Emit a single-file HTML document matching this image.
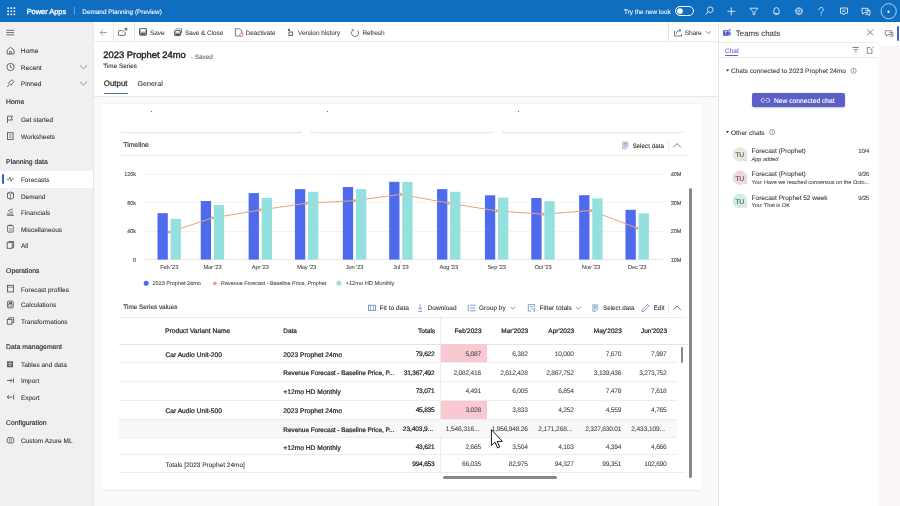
<!DOCTYPE html>
<html><head><meta charset="utf-8"><title>Demand Planning</title>
<style>
html,body{margin:0;padding:0;width:900px;height:506px;overflow:hidden;background:#fff;font-family:"Liberation Sans", sans-serif}
.t{position:absolute;white-space:nowrap;line-height:1;text-rendering:geometricPrecision}
.b{position:absolute}
svg.ov{position:absolute;left:0;top:0;width:900px;height:506px;overflow:visible}
</style></head><body>

<div class="b" style="left:0px;top:0px;width:900px;height:22px;background:#106EC1"></div>
<div class="b" style="left:0px;top:22px;width:93px;height:484px;background:#F0EFF2"></div>
<div class="b" style="left:93px;top:22px;width:1px;height:484px;background:#E6E6E6"></div>
<div class="b" style="left:94px;top:22px;width:624px;height:75px;background:#FFFFFF"></div>
<div class="b" style="left:94px;top:97px;width:624px;height:409px;background:#FCF9FB"></div>
<div class="b" style="left:94px;top:41px;width:624px;height:1px;background:#EDEBE9"></div>
<div class="b" style="left:94px;top:96px;width:624px;height:1px;background:#E8E6E6"></div>
<div class="b" style="left:101px;top:104px;width:601px;height:386px;background:#FFFFFF;box-shadow:0 0 1.5px rgba(0,0,0,0.09), 0 0.6px 1.4px rgba(0,0,0,0.05);border-radius:0 0 2px 2px"></div>
<div class="b" style="left:101px;top:104px;width:601px;height:40px;overflow:hidden">
<div class="b" style="left:19.0px;top:-10px;width:182.2px;height:37.6px;background:#fff;border-radius:0 0 2px 2px;box-shadow:0 0.5px 1px rgba(0,0,0,0.11), 0 0 0.7px rgba(0,0,0,0.11)"></div>
<div class="b" style="left:210.4px;top:-10px;width:181.9px;height:37.6px;background:#fff;border-radius:0 0 2px 2px;box-shadow:0 0.5px 1px rgba(0,0,0,0.11), 0 0 0.7px rgba(0,0,0,0.11)"></div>
<div class="b" style="left:401.2px;top:-10px;width:182.3px;height:37.6px;background:#fff;border-radius:0 0 2px 2px;box-shadow:0 0.5px 1px rgba(0,0,0,0.11), 0 0 0.7px rgba(0,0,0,0.11)"></div>
</div>
<div class="b" style="left:718px;top:22px;width:160px;height:484px;background:#FFFFFF"></div>
<div class="b" style="left:718px;top:22px;width:1px;height:484px;background:#E8E5E7"></div>
<div class="b" style="left:878px;top:22px;width:22px;height:22px;background:#FFFFFF"></div>
<div class="b" style="left:878.5px;top:44.5px;width:21.5px;height:461.5px;background:#FAF6FA"></div>
<div class="b" style="left:74.3px;top:6.5px;width:0.5px;height:8.5px;background:rgba(255,255,255,0.35)"></div>
<div class="b" style="left:675.2px;top:6.2px;width:18.5px;height:9.8px;border:0.85px solid #fff;border-radius:5px;box-sizing:border-box"></div>
<div class="b" style="left:0px;top:171px;width:92.6px;height:16.5px;background:#FFFFFF"></div>
<div class="b" style="left:2.0px;top:174.4px;width:1.7999999999999998px;height:9.599999999999994px;background:#2F62D6;border-radius:1px"></div>
<div class="b" style="left:113.1px;top:22px;width:0.6000000000000085px;height:19px;background:#E6E4E2"></div>
<div class="b" style="left:133.5px;top:22px;width:0.5999999999999943px;height:19px;background:#E6E4E2"></div>
<div class="b" style="left:668.1px;top:22px;width:0.6000000000000227px;height:19px;background:#E6E4E2"></div>
<div class="b" style="left:103.8px;top:92.8px;width:24.200000000000003px;height:1.0px;background:#4A6DA7;border-radius:1px"></div>
<div class="b" style="left:151.3px;top:111.2px;width:0.9000000000000057px;height:1.2000000000000028px;background:#666"></div>
<div class="b" style="left:327.2px;top:111.2px;width:0.8999999999999773px;height:1.2000000000000028px;background:#666"></div>
<div class="b" style="left:518.3px;top:111.2px;width:0.8999999999999773px;height:1.2000000000000028px;background:#666"></div>
<div class="b" style="left:119px;top:155px;width:567.7px;height:0.5999999999999943px;background:#EDEBE9"></div>
<div class="b" style="left:668.3px;top:140.5px;width:0.5px;height:10.0px;background:#EAE8E6"></div>
<div class="b" style="left:143.5px;top:173.89999999999998px;width:519.9px;height:0.6000000000000227px;background:#F4F3F2"></div>
<div class="b" style="left:143.5px;top:202.36999999999998px;width:519.9px;height:0.6000000000000227px;background:#F4F3F2"></div>
<div class="b" style="left:143.5px;top:230.82999999999998px;width:519.9px;height:0.6000000000000227px;background:#F4F3F2"></div>
<div class="b" style="left:143.5px;top:259.3px;width:519.9px;height:0.6000000000000227px;background:#EAE8E6"></div>
<div class="b" style="left:120px;top:316.8px;width:566px;height:0.5999999999999659px;background:#EDEBE9"></div>
<div class="b" style="left:668.2px;top:303.5px;width:0.5px;height:9.0px;background:#EAE8E6"></div>
<div class="b" style="left:119px;top:343.7px;width:568.7px;height:0.6000000000000227px;background:#E6E4E2"></div>
<div class="b" style="left:440.2px;top:317.4px;width:0.6000000000000227px;height:155.10000000000002px;background:#EDEBE9"></div>
<div class="b" style="left:119px;top:419.2px;width:558px;height:18.19999999999999px;background:#FAF7FA"></div>
<div class="b" style="left:440.8px;top:344.3px;width:45.89999999999998px;height:18.0px;background:#F9C9D3"></div>
<div class="b" style="left:440.8px;top:400.3px;width:45.89999999999998px;height:18.399999999999977px;background:#F9C9D3"></div>
<div class="b" style="left:119px;top:362.05px;width:558px;height:0.6000000000000227px;background:#EFEDEC"></div>
<div class="b" style="left:119px;top:380.75px;width:558px;height:0.6000000000000227px;background:#EFEDEC"></div>
<div class="b" style="left:119px;top:399.75px;width:558px;height:0.6000000000000227px;background:#EFEDEC"></div>
<div class="b" style="left:119px;top:418.75px;width:558px;height:0.6000000000000227px;background:#EFEDEC"></div>
<div class="b" style="left:119px;top:437.35px;width:558px;height:0.6000000000000227px;background:#EFEDEC"></div>
<div class="b" style="left:119px;top:454.25px;width:558px;height:0.6000000000000227px;background:#EFEDEC"></div>
<div class="b" style="left:119px;top:472.05px;width:567px;height:0.6000000000000227px;background:#EFEDEC"></div>
<div class="b" style="left:680.5px;top:347.4px;width:2.9px;height:15.2px;background:#8A8886;border-radius:1.5px"></div>
<div class="b" style="left:689.1px;top:187.7px;width:2.9px;height:290.3px;background:#8A8886;border-radius:1.5px"></div>
<div class="b" style="left:443.1px;top:475.8px;width:113.8px;height:3.2px;background:#8A8886;border-radius:1.6px"></div>
<div class="b" style="left:719px;top:41.8px;width:159px;height:0.6000000000000014px;background:#EDEBE9"></div>
<div class="b" style="left:725px;top:55.2px;width:13.299999999999955px;height:1.0px;background:#5B5FC7;border-radius:1px"></div>
<div class="b" style="left:719px;top:57.1px;width:159px;height:0.6000000000000014px;background:#EDEBE9"></div>
<div class="b" style="left:752px;top:93.2px;width:92.6px;height:14.3px;background:#5B5FC7;border-radius:2px;box-shadow:0 0.6px 1.6px rgba(0,0,0,0.22)"></div>
<div class="b" style="left:896.6px;top:26.2px;width:2.1000000000000227px;height:14.599999999999998px;background:#4163B9;border-radius:1px"></div>
<svg class="ov" width="900" height="506" viewBox="0 0 900 506"><rect x="7.30" y="7.30" width="1.7" height="1.7" rx="0.4" fill="#fff"/><rect x="10.40" y="7.30" width="1.7" height="1.7" rx="0.4" fill="#fff"/><rect x="13.50" y="7.30" width="1.7" height="1.7" rx="0.4" fill="#fff"/><rect x="7.30" y="10.40" width="1.7" height="1.7" rx="0.4" fill="#fff"/><rect x="10.40" y="10.40" width="1.7" height="1.7" rx="0.4" fill="#fff"/><rect x="13.50" y="10.40" width="1.7" height="1.7" rx="0.4" fill="#fff"/><rect x="7.30" y="13.50" width="1.7" height="1.7" rx="0.4" fill="#fff"/><rect x="10.40" y="13.50" width="1.7" height="1.7" rx="0.4" fill="#fff"/><rect x="13.50" y="13.50" width="1.7" height="1.7" rx="0.4" fill="#fff"/><circle cx="679.9" cy="11.1" r="2.9" fill="#fff"/><circle cx="710.3" cy="9.7" r="2.8" fill="none" stroke="#fff" stroke-width="0.8"/><line x1="708.3" y1="11.7" x2="705.5" y2="14.5" stroke="#fff" stroke-width="0.9"/><line x1="731.3" y1="7.3" x2="731.3" y2="15.3" stroke="#fff" stroke-width="0.8"/><line x1="727.3" y1="11.3" x2="735.3" y2="11.3" stroke="#fff" stroke-width="0.8"/><path d="M749.9 8.2 L758 8.2 L754.8 11.9 L754.8 14.6 L753.1 14.6 L753.1 11.9 Z" fill="none" stroke="#fff" stroke-width="0.75" stroke-linejoin="round"/><path d="M773.9 13.6 L773.9 10.2 A2.55 2.55 0 0 1 779 10.2 L779 13.6 Z" fill="none" stroke="#fff" stroke-width="0.8" stroke-linejoin="round"/><path d="M775.7 14.6 L777.2 14.6" stroke="#fff" stroke-width="0.8" stroke-linecap="round"/><circle cx="799" cy="11.2" r="3.45" fill="none" stroke="#fff" stroke-width="0.9" stroke-dasharray="1.15 0.65"/><circle cx="799" cy="11.2" r="2.75" fill="none" stroke="#fff" stroke-width="0.6"/><circle cx="799" cy="11.2" r="1.0" fill="none" stroke="#fff" stroke-width="0.6"/><path d="M818.9 9.6 A2.2 2.2 0 1 1 822.4 11.4 C821.3 12.1 821.1 12.5 821.1 13.4" fill="none" stroke="#fff" stroke-width="0.75" stroke-linecap="round"/><circle cx="821.1" cy="14.9" r="0.5" fill="#fff"/><path d="M840.5 8 L847.5 8 L847.5 13.2 L845 13.2 L843.6 15 L842.4 13.2 L840.5 13.2 Z" fill="none" stroke="#fff" stroke-width="0.8" stroke-linejoin="round"/><line x1="842.2" y1="10" x2="845.8" y2="10" stroke="#fff" stroke-width="0.6"/><line x1="842.2" y1="11.5" x2="845" y2="11.5" stroke="#fff" stroke-width="0.6"/><path d="M862 8.3 L868 8.3 L868 12.6 L864.3 12.6 L862.8 14.2 L862.8 12.6 L862 12.6 Z" fill="none" stroke="#fff" stroke-width="0.8" stroke-linejoin="round"/><path d="M865 10.3 L870 10.3 L870 14.3 L869.3 14.3 L869.3 15.6 L868 14.3 L865 14.3" fill="none" stroke="#fff" stroke-width="0.8" stroke-linejoin="round"/><circle cx="888.7" cy="11.25" r="7.6" fill="none" stroke="#E8F1FA" stroke-width="0.75"/><ellipse cx="888.5" cy="11.7" rx="1.1" ry="1.3" fill="#fff"/><line x1="6.3" y1="30.3" x2="14.2" y2="30.3" stroke="#424242" stroke-width="0.75"/><line x1="6.3" y1="32.6" x2="14.2" y2="32.6" stroke="#424242" stroke-width="0.75"/><line x1="6.3" y1="34.9" x2="14.2" y2="34.9" stroke="#424242" stroke-width="0.75"/><path d="M7.2 53.900000000000006 L7.2 50.1 L10.6 47.300000000000004 L14 50.1 L14 53.900000000000006 Z" fill="none" stroke="#505050" stroke-width="0.85" stroke-linejoin="round"/><rect x="9.6" y="51.300000000000004" width="2" height="2.6" fill="none" stroke="#505050" stroke-width="0.6"/><circle cx="10.5" cy="67.0" r="3.6" fill="none" stroke="#505050" stroke-width="0.85"/><path d="M10.4 65.0 L10.4 67.3 L12 67.9" fill="none" stroke="#505050" stroke-width="0.85"/><path d="M7 86.89999999999999 L9.3 84.6 M8.4 82.89999999999999 L12 79.7 L14 81.7 L10.8 85.3 Z" fill="none" stroke="#505050" stroke-width="0.85" stroke-linejoin="round"/><path d="M79.8 65.4 L83.4 68.8 L87 65.4" fill="none" stroke="#616161" stroke-width="0.7"/><path d="M79.8 81.7 L83.4 85.1 L87 81.7" fill="none" stroke="#616161" stroke-width="0.7"/><path d="M7.5 123.0 L7.5 116.2 L12.5 116.2 L11.2 118.1 L12.5 120.0 L7.5 120.0" fill="none" stroke="#505050" stroke-width="0.85" stroke-linejoin="round"/><rect x="7.5" y="132.7" width="5.6" height="6.8" fill="none" stroke="#505050" stroke-width="0.85"/><line x1="9" y1="134.7" x2="11.6" y2="134.7" stroke="#505050" stroke-width="0.5"/><line x1="9" y1="136.1" x2="11.6" y2="136.1" stroke="#505050" stroke-width="0.5"/><line x1="9" y1="137.5" x2="11.6" y2="137.5" stroke="#505050" stroke-width="0.5"/><path d="M6.8 179.4 L8.6 179.4 L9.8 177.20000000000002 L11.2 181.20000000000002 L12.4 178.8 L14 178.8" fill="none" stroke="#424242" stroke-width="0.7" stroke-linejoin="round"/><path d="M7.5 193.1 L10.5 192.0 L13.5 193.1 L13.5 198.0 L10.5 199.1 L7.5 198.0 Z" fill="none" stroke="#505050" stroke-width="0.85"/><path d="M7.5 193.1 L10.5 194.2 L13.5 193.1 M10.5 194.2 L10.5 199.1" fill="none" stroke="#505050" stroke-width="0.6"/><path d="M7 215.39999999999998 L14 215.39999999999998 M8 215.2 L8 212.79999999999998 M10 215.2 L10 211.6 M12 215.2 L12 210.7 M8 211.0 L12.5 208.79999999999998" fill="none" stroke="#505050" stroke-width="0.8"/><rect x="7.6" y="225.5" width="5.6" height="6.6" rx="0.6" fill="none" stroke="#505050" stroke-width="0.85"/><rect x="9.2" y="224.7" width="2.4" height="1.4" fill="#505050"/><line x1="9" y1="228.7" x2="11.8" y2="228.7" stroke="#505050" stroke-width="0.5"/><line x1="9" y1="230.2" x2="11.8" y2="230.2" stroke="#505050" stroke-width="0.5"/><rect x="7.2" y="242.3" width="5" height="6" fill="none" stroke="#505050" stroke-width="0.85"/><path d="M8.8 242.3 L8.8 241.5 L13.6 241.5 L13.6 247.5 L12.2 247.5" fill="none" stroke="#505050" stroke-width="0.85"/><rect x="7.5" y="285.3" width="6" height="6.6" fill="none" stroke="#505050" stroke-width="0.85"/><line x1="7.5" y1="287.20000000000005" x2="13.5" y2="287.20000000000005" stroke="#505050" stroke-width="0.6"/><rect x="7.6" y="301.09999999999997" width="5.6" height="6.8" rx="0.8" fill="none" stroke="#505050" stroke-width="0.85"/><rect x="8.8" y="302.29999999999995" width="3.2" height="1.6" fill="#505050"/><rect x="8.8" y="304.7" width="3.2" height="2" fill="none" stroke="#505050" stroke-width="0.5"/><rect x="7.3" y="319.4" width="4.6" height="4.8" fill="none" stroke="#505050" stroke-width="0.85"/><path d="M8.8 319.4 L8.8 317.8 L13.6 317.8 L13.6 322.6 L11.9 322.6" fill="none" stroke="#505050" stroke-width="0.85"/><rect x="7.0" y="361.40000000000003" width="6" height="5.8" fill="#505050"/><path d="M7.6 363.3 L12.4 363.3 M7.6 365.2 L12.4 365.2 M10 362.0 L10 366.6" stroke="#F1F0F2" stroke-width="0.55"/><path d="M7 380.5 L12 380.5 M10.2 378.7 L12 380.5 L10.2 382.3 M13.5 378.1 L13.5 382.9" fill="none" stroke="#424242" stroke-width="0.8"/><path d="M7.2 397.1 L12.4 397.1 M9 395.3 L7.2 397.1 L9 398.90000000000003 M13.6 394.70000000000005 L13.6 399.5" fill="none" stroke="#424242" stroke-width="0.8"/><path d="M8 437.7 L13 437.7 L14 440.3 L13 442.90000000000003 L8 442.90000000000003 L7 440.3 Z" fill="none" stroke="#505050" stroke-width="0.85"/><circle cx="10.5" cy="440.3" r="1.2" fill="none" stroke="#505050" stroke-width="0.6"/><path d="M100.3 32.5 L106.8 32.5 M103.1 29.7 L100.3 32.5 L103.1 35.3" fill="none" stroke="#616161" stroke-width="0.6"/><rect x="118.4" y="30.6" width="6.8" height="4.8" rx="0.7" fill="none" stroke="#424242" stroke-width="0.8"/><path d="M122.6 32.2 L126.6 28.6 M124.6 28.4 L126.8 28.4 L126.8 30.6" fill="none" stroke="#424242" stroke-width="0.6"/><rect x="122.5" y="29.6" width="3.2" height="2.4" fill="#fff"/><path d="M123 31.8 L126.6 28.6 M124.8 28.5 L126.7 28.5 L126.7 30.4" fill="none" stroke="#424242" stroke-width="0.6"/><rect x="139.5" y="28.6" width="7" height="6.6" rx="0.8" fill="#9AACC8" stroke="#3E3E3E" stroke-width="0.8"/><rect x="140.9" y="29" width="4.2" height="2.6" fill="#fff"/><rect x="140.4" y="33.2" width="5.2" height="1.5" fill="#4A5670"/><rect x="174.6" y="30.6" width="6" height="5" rx="0.7" fill="#9AACC8" stroke="#3E3E3E" stroke-width="0.8"/><rect x="175.8" y="31" width="3.6" height="1.6" fill="#fff"/><rect x="175.4" y="33.8" width="4.4" height="1.3" fill="#4A5670"/><path d="M176.2 29.5 L176.2 28.2 M178 29.5 L178 28.2 M179.8 29.5 L179.8 28.2 M181.6 28.2 L181.6 33" fill="none" stroke="#3B3B3B" stroke-width="0.7"/><path d="M235.4 28.8 L239.8 28.8 L242 31 L242 36 L235.4 36 Z" fill="none" stroke="#424242" stroke-width="0.7"/><circle cx="241.4" cy="34.6" r="1.6" fill="#fff" stroke="#C4314B" stroke-width="0.6"/><rect x="288.2" y="28.8" width="1.6" height="2.2" fill="#424242"/><rect x="289" y="32" width="3.4" height="3.6" fill="none" stroke="#424242" stroke-width="0.8"/><path d="M357.6 30.4 A3.6 3.6 0 1 1 352.6 30.2" fill="none" stroke="#424242" stroke-width="0.7"/><path d="M352 28.6 L352.6 30.3 L354.4 30.2" fill="none" stroke="#424242" stroke-width="0.6"/><path d="M674.5 31 L674.5 36 L681.5 36 L681.5 34" fill="none" stroke="#424242" stroke-width="0.7"/><path d="M676.4 34 C676.4 31 678 30.4 680.6 30.4 M679.2 28.8 L681 30.4 L679.2 32" fill="none" stroke="#0F6CBD" stroke-width="0.8"/><path d="M705.8 31.2 L708.3 33.7 L710.8 31.2" fill="none" stroke="#424242" stroke-width="0.6"/><path d="M622.6999999999999 142.1 L627.8 142.1 L627.8 147.0 L625.9 148.8 L622.6999999999999 148.8 Z" fill="#DCE6F5" stroke="#7C97C4" stroke-width="0.6"/><path d="M623.8 143.5 L626.6999999999999 143.5 M623.8 144.9 L626.6999999999999 144.9 M623.8 146.3 L625.6999999999999 146.3" stroke="#5E6E88" stroke-width="0.5"/><path d="M673.4 147.3 L677.1 143.5 L680.8 147.3" fill="none" stroke="#424242" stroke-width="0.7"/><rect x="157.50" y="213.20" width="10.3" height="46.40" fill="#4F6BED"/><line x1="169.20" y1="259.60" x2="169.20" y2="263.20" stroke="#E3E1DF" stroke-width="0.6"/><rect x="200.75" y="201.00" width="10.3" height="58.60" fill="#4F6BED"/><line x1="212.45" y1="259.60" x2="212.45" y2="263.20" stroke="#E3E1DF" stroke-width="0.6"/><rect x="248.63" y="193.10" width="10.3" height="66.50" fill="#4F6BED"/><line x1="260.33" y1="259.60" x2="260.33" y2="263.20" stroke="#E3E1DF" stroke-width="0.6"/><rect x="294.96" y="189.10" width="10.3" height="70.50" fill="#4F6BED"/><line x1="306.66" y1="259.60" x2="306.66" y2="263.20" stroke="#E3E1DF" stroke-width="0.6"/><rect x="342.84" y="187.00" width="10.3" height="72.60" fill="#4F6BED"/><line x1="354.54" y1="259.60" x2="354.54" y2="263.20" stroke="#E3E1DF" stroke-width="0.6"/><rect x="389.17" y="181.80" width="10.3" height="77.80" fill="#4F6BED"/><line x1="400.87" y1="259.60" x2="400.87" y2="263.20" stroke="#E3E1DF" stroke-width="0.6"/><rect x="437.05" y="189.10" width="10.3" height="70.50" fill="#4F6BED"/><line x1="448.75" y1="259.60" x2="448.75" y2="263.20" stroke="#E3E1DF" stroke-width="0.6"/><rect x="484.93" y="195.30" width="10.3" height="64.30" fill="#4F6BED"/><line x1="496.63" y1="259.60" x2="496.63" y2="263.20" stroke="#E3E1DF" stroke-width="0.6"/><rect x="531.27" y="198.00" width="10.3" height="61.60" fill="#4F6BED"/><line x1="542.97" y1="259.60" x2="542.97" y2="263.20" stroke="#E3E1DF" stroke-width="0.6"/><rect x="579.15" y="195.20" width="10.3" height="64.40" fill="#4F6BED"/><line x1="590.85" y1="259.60" x2="590.85" y2="263.20" stroke="#E3E1DF" stroke-width="0.6"/><rect x="625.48" y="209.80" width="10.3" height="49.80" fill="#4F6BED"/><line x1="637.18" y1="259.60" x2="637.18" y2="263.20" stroke="#E3E1DF" stroke-width="0.6"/><polyline points="169.20,232.20 212.45,217.90 260.33,210.00 306.66,203.20 354.54,200.70 400.87,194.30 448.75,203.20 496.63,210.90 542.97,214.20 590.85,210.50 637.18,228.20" fill="none" stroke="#E9A37D" stroke-width="1.0"/><rect x="167.85" y="230.85" width="2.7" height="2.7" fill="#E9A37D" transform="rotate(45 169.20 232.20)"/><rect x="211.10" y="216.55" width="2.7" height="2.7" fill="#E9A37D" transform="rotate(45 212.45 217.90)"/><rect x="258.98" y="208.65" width="2.7" height="2.7" fill="#E9A37D" transform="rotate(45 260.33 210.00)"/><rect x="305.31" y="201.85" width="2.7" height="2.7" fill="#E9A37D" transform="rotate(45 306.66 203.20)"/><rect x="353.19" y="199.35" width="2.7" height="2.7" fill="#E9A37D" transform="rotate(45 354.54 200.70)"/><rect x="399.52" y="192.95" width="2.7" height="2.7" fill="#E9A37D" transform="rotate(45 400.87 194.30)"/><rect x="447.40" y="201.85" width="2.7" height="2.7" fill="#E9A37D" transform="rotate(45 448.75 203.20)"/><rect x="495.28" y="209.55" width="2.7" height="2.7" fill="#E9A37D" transform="rotate(45 496.63 210.90)"/><rect x="541.62" y="212.85" width="2.7" height="2.7" fill="#E9A37D" transform="rotate(45 542.97 214.20)"/><rect x="589.50" y="209.15" width="2.7" height="2.7" fill="#E9A37D" transform="rotate(45 590.85 210.50)"/><rect x="635.83" y="226.85" width="2.7" height="2.7" fill="#E9A37D" transform="rotate(45 637.18 228.20)"/><rect x="170.60" y="218.90" width="10.3" height="40.70" fill="#93E0DE"/><rect x="213.85" y="205.00" width="10.3" height="54.60" fill="#93E0DE"/><rect x="261.73" y="197.80" width="10.3" height="61.80" fill="#93E0DE"/><rect x="308.06" y="191.80" width="10.3" height="67.80" fill="#93E0DE"/><rect x="355.94" y="189.10" width="10.3" height="70.50" fill="#93E0DE"/><rect x="402.27" y="182.00" width="10.3" height="77.60" fill="#93E0DE"/><rect x="450.15" y="191.80" width="10.3" height="67.80" fill="#93E0DE"/><rect x="498.03" y="197.60" width="10.3" height="62.00" fill="#93E0DE"/><rect x="544.37" y="201.10" width="10.3" height="58.50" fill="#93E0DE"/><rect x="592.25" y="198.40" width="10.3" height="61.20" fill="#93E0DE"/><rect x="638.58" y="213.40" width="10.3" height="46.20" fill="#93E0DE"/><circle cx="146.2" cy="283.2" r="2.5" fill="#4F6BED"/><circle cx="214.8" cy="283.3" r="1.9" fill="#E9A37D"/><circle cx="338.9" cy="283.3" r="2.5" fill="#93E0DE"/><rect x="368.6" y="305.2" width="7" height="5.4" fill="none" stroke="#4A76B6" stroke-width="0.7"/><path d="M370.6 305.2 L370.6 310.6 M373.6 305.2 L373.6 310.6" stroke="#4A76B6" stroke-width="0.6"/><path d="M420.2 304.3 L420.2 309.4 M418.3 307.6 L420.2 309.5 L422.1 307.6 M418.2 311.4 L422.3 311.4" fill="none" stroke="#4A76B6" stroke-width="0.7"/><path d="M468.3 304.6 L468.3 311.4 M470 305.2 L475.6 305.2 M470 308 L475.6 308 M470 310.8 L475.6 310.8" fill="none" stroke="#4A76B6" stroke-width="0.7"/><path d="M510.5 306.8 L512.8 309.1 L515.1 306.8" fill="none" stroke="#424242" stroke-width="0.6"/><path d="M528.3 304.6 L534.4 304.6 L534.4 307.4 M528.3 304.6 L528.3 311 L531.4 311" fill="none" stroke="#4A76B6" stroke-width="0.7"/><path d="M530 306.5 L533 306.5 M530 308 L532 308 M532.5 308.8 L535.6 308.8 L534.3 310.4 L534.3 311.8 L533.8 311.5 L533.8 310.4 Z" fill="none" stroke="#4A76B6" stroke-width="0.5"/><path d="M576 306.8 L578.5 309.3 L581 306.8" fill="none" stroke="#424242" stroke-width="0.6"/><path d="M592.6999999999999 304.7 L597.8 304.7 L597.8 309.6 L595.9 311.4 L592.6999999999999 311.4 Z" fill="#DCE6F5" stroke="#7C97C4" stroke-width="0.6"/><path d="M593.8 306.1 L596.6999999999999 306.1 M593.8 307.5 L596.6999999999999 307.5 M593.8 308.9 L595.6999999999999 308.9" stroke="#5E6E88" stroke-width="0.5"/><path d="M642 311.6 L642.4 309.6 L647.6 304.4 L649.2 306 L644 311.2 Z" fill="none" stroke="#4A76B6" stroke-width="0.7" stroke-linejoin="round"/><path d="M673.2 309.9 L677 306.1 L680.8 309.9" fill="none" stroke="#424242" stroke-width="0.7"/><path d="M491.4 429.6 L491.4 445.5 L495 442.2 L497.6 448 L499.7 447 L497.2 441.4 L502.4 441.4 Z" fill="#fff" stroke="#000" stroke-width="0.9" stroke-linejoin="round"/><circle cx="729.6" cy="30.0" r="1.1" fill="#7B83EB"/><rect x="727.6" y="31.4" width="3.3" height="4.0" rx="1" fill="#7B83EB"/><rect x="723.1" y="30.3" width="5.4" height="5.4" rx="0.5" fill="#4B53BC"/><path d="M724.2 31.6 L727.4 31.6 M725.8 31.6 L725.8 34.6" stroke="#fff" stroke-width="0.7"/><path d="M867.4 29.5 L873.2 35.3 M873.2 29.5 L867.4 35.3" stroke="#424242" stroke-width="0.7"/><path d="M852.6 47.5 L858.9 47.5 M853.7 49.6 L857.8 49.6 M854.9 51.7 L856.6 51.7" stroke="#616161" stroke-width="0.8"/><path d="M872 49.6 L872 53.3 L867.3 53.3 L867.3 47.5 L870.3 47.5 M870 50.2 L873.8 46.6" fill="none" stroke="#616161" stroke-width="0.7"/><path d="M726.1 69.6 L729.1 69.6 L727.6 71.6 Z" fill="#242424"/><circle cx="853.6" cy="70.8" r="2.6" fill="none" stroke="#616161" stroke-width="0.6"/><line x1="853.6" y1="70.2" x2="853.6" y2="72.2" stroke="#616161" stroke-width="0.6"/><circle cx="853.6" cy="69.3" r="0.35" fill="#616161"/><path d="M764.4 98.6 L762.9 98.6 A1.8 1.8 0 0 0 762.9 102.2 L764.4 102.2 M766.4 98.6 L767.9 98.6 A1.8 1.8 0 0 1 767.9 102.2 L766.4 102.2 M764 100.4 L766.8 100.4" fill="none" stroke="#fff" stroke-width="0.7"/><path d="M726.0 131.0 L729.0 131.0 L727.5 133.0 Z" fill="#242424"/><circle cx="772.2" cy="132.2" r="2.6" fill="none" stroke="#616161" stroke-width="0.6"/><line x1="772.2" y1="131.6" x2="772.2" y2="133.6" stroke="#616161" stroke-width="0.6"/><circle cx="772.2" cy="130.7" r="0.35" fill="#616161"/><circle cx="740" cy="154.5" r="7.3" fill="#E8E8DE"/><circle cx="745.2" cy="159.2" r="2.2" fill="#fff"/><circle cx="745.2" cy="159.2" r="1.5" fill="none" stroke="#8A8886" stroke-width="0.45"/><circle cx="740" cy="177.7" r="7.3" fill="#EDD8DA"/><circle cx="745.2" cy="182.39999999999998" r="2.2" fill="#fff"/><circle cx="745.2" cy="182.39999999999998" r="1.5" fill="none" stroke="#8A8886" stroke-width="0.45"/><circle cx="740" cy="201.0" r="7.3" fill="#D2EDE3"/><circle cx="745.2" cy="205.7" r="2.2" fill="#fff"/><circle cx="745.2" cy="205.7" r="1.5" fill="none" stroke="#8A8886" stroke-width="0.45"/><path d="M885.3 30.7 L891.6 30.7 L891.6 34.6 L888.2 34.6 L886.6 36.2 L886.6 34.6 L885.3 34.6 Z" fill="none" stroke="#616161" stroke-width="0.7" stroke-linejoin="round"/><path d="M889 32.6 L893 32.6 L893 36 L892.3 36 L892.3 37 L891.2 36 L889 36" fill="none" stroke="#616161" stroke-width="0.6"/></svg>
<div style="position:absolute;left:0;top:0;width:900px;height:506px;will-change:transform"><div class="t" style="left:26.70px;top:8.00px;font-size:7.4px;font-weight:normal;-webkit-text-stroke-width:0.07px;color:#FFFFFF;-webkit-text-stroke-width:0.3px">Power Apps</div>
<div class="t" style="left:82.30px;top:10.00px;font-size:6.4px;font-weight:normal;-webkit-text-stroke-width:0.07px;color:#FFFFFF;">Demand Planning (Preview)</div>
<div class="t" style="left:624.00px;top:10.00px;font-size:6.4px;font-weight:normal;-webkit-text-stroke-width:0.07px;color:#FFFFFF;">Try the new look</div>
<div class="t" style="left:20.80px;top:49.00px;font-size:6.6px;font-weight:normal;-webkit-text-stroke-width:0.07px;color:#323130;">Home</div>
<div class="t" style="left:20.80px;top:66.00px;font-size:6.6px;font-weight:normal;-webkit-text-stroke-width:0.07px;color:#323130;">Recent</div>
<div class="t" style="left:20.80px;top:82.00px;font-size:6.6px;font-weight:normal;-webkit-text-stroke-width:0.07px;color:#323130;">Pinned</div>
<div class="t" style="left:6.10px;top:100.00px;font-size:6.8px;font-weight:normal;-webkit-text-stroke-width:0.12px;color:#242424;">Home</div>
<div class="t" style="left:20.90px;top:118.00px;font-size:6.5px;font-weight:normal;-webkit-text-stroke-width:0.07px;color:#323130;">Get started</div>
<div class="t" style="left:20.90px;top:135.00px;font-size:6.5px;font-weight:normal;-webkit-text-stroke-width:0.07px;color:#323130;">Worksheets</div>
<div class="t" style="left:6.10px;top:160.00px;font-size:6.8px;font-weight:normal;-webkit-text-stroke-width:0.12px;color:#242424;">Planning data</div>
<div class="t" style="left:20.90px;top:178.00px;font-size:6.5px;font-weight:normal;-webkit-text-stroke-width:0.07px;color:#323130;">Forecasts</div>
<div class="t" style="left:20.90px;top:195.00px;font-size:6.5px;font-weight:normal;-webkit-text-stroke-width:0.07px;color:#323130;">Demand</div>
<div class="t" style="left:20.90px;top:211.00px;font-size:6.5px;font-weight:normal;-webkit-text-stroke-width:0.07px;color:#323130;">Financials</div>
<div class="t" style="left:20.90px;top:228.00px;font-size:6.5px;font-weight:normal;-webkit-text-stroke-width:0.07px;color:#323130;">Miscellaneous</div>
<div class="t" style="left:20.90px;top:244.00px;font-size:6.5px;font-weight:normal;-webkit-text-stroke-width:0.07px;color:#323130;">All</div>
<div class="t" style="left:6.10px;top:269.00px;font-size:6.8px;font-weight:normal;-webkit-text-stroke-width:0.12px;color:#242424;">Operations</div>
<div class="t" style="left:20.90px;top:288.00px;font-size:6.5px;font-weight:normal;-webkit-text-stroke-width:0.07px;color:#323130;">Forecast profiles</div>
<div class="t" style="left:20.90px;top:303.00px;font-size:6.5px;font-weight:normal;-webkit-text-stroke-width:0.07px;color:#323130;">Calculations</div>
<div class="t" style="left:20.90px;top:320.00px;font-size:6.5px;font-weight:normal;-webkit-text-stroke-width:0.07px;color:#323130;">Transformations</div>
<div class="t" style="left:6.10px;top:345.00px;font-size:6.8px;font-weight:normal;-webkit-text-stroke-width:0.12px;color:#242424;">Data management</div>
<div class="t" style="left:20.90px;top:363.00px;font-size:6.5px;font-weight:normal;-webkit-text-stroke-width:0.07px;color:#323130;">Tables and data</div>
<div class="t" style="left:20.90px;top:379.00px;font-size:6.5px;font-weight:normal;-webkit-text-stroke-width:0.07px;color:#323130;">Import</div>
<div class="t" style="left:20.90px;top:396.00px;font-size:6.5px;font-weight:normal;-webkit-text-stroke-width:0.07px;color:#323130;">Export</div>
<div class="t" style="left:6.10px;top:421.00px;font-size:6.8px;font-weight:normal;-webkit-text-stroke-width:0.12px;color:#242424;">Configuration</div>
<div class="t" style="left:20.90px;top:439.00px;font-size:6.5px;font-weight:normal;-webkit-text-stroke-width:0.07px;color:#323130;">Custom Azure ML</div>
<div class="t" style="left:150.00px;top:31.00px;font-size:6.5px;font-weight:normal;-webkit-text-stroke-width:0.07px;color:#424242;letter-spacing:-0.1px">Save</div>
<div class="t" style="left:185.00px;top:31.00px;font-size:6.3px;font-weight:normal;-webkit-text-stroke-width:0.07px;color:#424242;">Save &amp; Close</div>
<div class="t" style="left:245.60px;top:31.00px;font-size:6.35px;font-weight:normal;-webkit-text-stroke-width:0.07px;color:#424242;">Deactivate</div>
<div class="t" style="left:298.00px;top:31.00px;font-size:6.45px;font-weight:normal;-webkit-text-stroke-width:0.07px;color:#424242;">Version history</div>
<div class="t" style="left:362.40px;top:31.00px;font-size:6.5px;font-weight:normal;-webkit-text-stroke-width:0.07px;color:#424242;letter-spacing:-0.1px">Refresh</div>
<div class="t" style="left:684.70px;top:31.00px;font-size:6.5px;font-weight:normal;-webkit-text-stroke-width:0.07px;color:#424242;letter-spacing:-0.1px">Share</div>
<div class="t" style="left:103.30px;top:50.00px;font-size:9.4px;font-weight:normal;-webkit-text-stroke-width:0.07px;color:#242424;-webkit-text-stroke-width:0.4px">2023 Prophet 24mo</div>
<div class="t" style="left:190.80px;top:55.00px;font-size:6.4px;font-weight:normal;-webkit-text-stroke-width:0.07px;color:#616161;">- Saved</div>
<div class="t" style="left:103.30px;top:64.00px;font-size:6.35px;font-weight:normal;-webkit-text-stroke-width:0.07px;color:#242424;-webkit-text-stroke-width:0.06px">Time Series</div>
<div class="t" style="left:103.80px;top:80.00px;font-size:7.9px;font-weight:normal;-webkit-text-stroke-width:0.22px;color:#242424;">Output</div>
<div class="t" style="left:137.50px;top:81.00px;font-size:7.1px;font-weight:normal;-webkit-text-stroke-width:0.07px;color:#323130;">General</div>
<div class="t" style="left:123.30px;top:143.00px;font-size:6.8px;font-weight:normal;-webkit-text-stroke-width:0.12px;color:#323130;">Timeline</div>
<div class="t" style="left:632.40px;top:144.00px;font-size:6.3px;font-weight:normal;-webkit-text-stroke-width:0.07px;color:#242424;">Select data</div>
<div class="t" style="left:-164.10px;width:300px;text-align:right;top:173.00px;font-size:5.6px;font-weight:normal;-webkit-text-stroke-width:0.07px;color:#424242;letter-spacing:-0.1px">120k</div>
<div class="t" style="left:-164.10px;width:300px;text-align:right;top:202.00px;font-size:5.6px;font-weight:normal;-webkit-text-stroke-width:0.07px;color:#424242;letter-spacing:-0.1px">80k</div>
<div class="t" style="left:-164.10px;width:300px;text-align:right;top:230.00px;font-size:5.6px;font-weight:normal;-webkit-text-stroke-width:0.07px;color:#424242;letter-spacing:-0.1px">40k</div>
<div class="t" style="left:-164.10px;width:300px;text-align:right;top:259.00px;font-size:5.6px;font-weight:normal;-webkit-text-stroke-width:0.07px;color:#424242;letter-spacing:-0.1px">0</div>
<div class="t" style="left:670.70px;top:173.00px;font-size:5.6px;font-weight:normal;-webkit-text-stroke-width:0.07px;color:#424242;letter-spacing:-0.1px">40M</div>
<div class="t" style="left:670.70px;top:202.00px;font-size:5.6px;font-weight:normal;-webkit-text-stroke-width:0.07px;color:#424242;letter-spacing:-0.1px">30M</div>
<div class="t" style="left:670.70px;top:230.00px;font-size:5.6px;font-weight:normal;-webkit-text-stroke-width:0.07px;color:#424242;letter-spacing:-0.1px">20M</div>
<div class="t" style="left:670.70px;top:259.00px;font-size:5.6px;font-weight:normal;-webkit-text-stroke-width:0.07px;color:#424242;letter-spacing:-0.1px">10M</div>
<div class="t" style="left:157.20px;top:266.00px;font-size:5.7px;font-weight:normal;-webkit-text-stroke-width:0.07px;color:#424242;width:24px;text-align:center;letter-spacing:-0.1px">Feb '23</div>
<div class="t" style="left:200.45px;top:266.00px;font-size:5.7px;font-weight:normal;-webkit-text-stroke-width:0.07px;color:#424242;width:24px;text-align:center;letter-spacing:-0.1px">Mar '23</div>
<div class="t" style="left:248.33px;top:266.00px;font-size:5.7px;font-weight:normal;-webkit-text-stroke-width:0.07px;color:#424242;width:24px;text-align:center;letter-spacing:-0.1px">Apr '23</div>
<div class="t" style="left:294.66px;top:266.00px;font-size:5.7px;font-weight:normal;-webkit-text-stroke-width:0.07px;color:#424242;width:24px;text-align:center;letter-spacing:-0.1px">May '23</div>
<div class="t" style="left:342.54px;top:266.00px;font-size:5.7px;font-weight:normal;-webkit-text-stroke-width:0.07px;color:#424242;width:24px;text-align:center;letter-spacing:-0.1px">Jun '23</div>
<div class="t" style="left:388.87px;top:266.00px;font-size:5.7px;font-weight:normal;-webkit-text-stroke-width:0.07px;color:#424242;width:24px;text-align:center;letter-spacing:-0.1px">Jul '23</div>
<div class="t" style="left:436.75px;top:266.00px;font-size:5.7px;font-weight:normal;-webkit-text-stroke-width:0.07px;color:#424242;width:24px;text-align:center;letter-spacing:-0.1px">Aug '23</div>
<div class="t" style="left:484.63px;top:266.00px;font-size:5.7px;font-weight:normal;-webkit-text-stroke-width:0.07px;color:#424242;width:24px;text-align:center;letter-spacing:-0.1px">Sep '23</div>
<div class="t" style="left:530.97px;top:266.00px;font-size:5.7px;font-weight:normal;-webkit-text-stroke-width:0.07px;color:#424242;width:24px;text-align:center;letter-spacing:-0.1px">Oct '23</div>
<div class="t" style="left:578.85px;top:266.00px;font-size:5.7px;font-weight:normal;-webkit-text-stroke-width:0.07px;color:#424242;width:24px;text-align:center;letter-spacing:-0.1px">Nov '23</div>
<div class="t" style="left:625.18px;top:266.00px;font-size:5.7px;font-weight:normal;-webkit-text-stroke-width:0.07px;color:#424242;width:24px;text-align:center;letter-spacing:-0.1px">Dec '23</div>
<div class="t" style="left:152.50px;top:282.00px;font-size:5.5px;font-weight:normal;-webkit-text-stroke-width:0.07px;color:#424242;">2023 Prophet 24mo</div>
<div class="t" style="left:221.10px;top:282.00px;font-size:5.4px;font-weight:normal;-webkit-text-stroke-width:0.07px;color:#424242;">Revenue Forecast - Baseline Price, Prophet</div>
<div class="t" style="left:345.60px;top:282.00px;font-size:5.7px;font-weight:normal;-webkit-text-stroke-width:0.07px;color:#424242;">+12mo HD Monthly</div>
<div class="t" style="left:123.30px;top:305.00px;font-size:6.4px;font-weight:normal;-webkit-text-stroke-width:0.12px;color:#323130;">Time Series values</div>
<div class="t" style="left:379.60px;top:306.00px;font-size:6.6px;font-weight:normal;-webkit-text-stroke-width:0.07px;color:#323130;">Fit to data</div>
<div class="t" style="left:427.60px;top:306.00px;font-size:6.5px;font-weight:normal;-webkit-text-stroke-width:0.07px;color:#323130;">Download</div>
<div class="t" style="left:479.00px;top:306.00px;font-size:6.5px;font-weight:normal;-webkit-text-stroke-width:0.07px;color:#323130;">Group by</div>
<div class="t" style="left:539.60px;top:306.00px;font-size:6.6px;font-weight:normal;-webkit-text-stroke-width:0.07px;color:#323130;">Filter totals</div>
<div class="t" style="left:603.00px;top:306.00px;font-size:6.3px;font-weight:normal;-webkit-text-stroke-width:0.07px;color:#323130;">Select data</div>
<div class="t" style="left:653.60px;top:306.00px;font-size:6.4px;font-weight:normal;-webkit-text-stroke-width:0.07px;color:#323130;">Edit</div>
<div class="t" style="left:165.00px;top:329.00px;font-size:6.7px;font-weight:normal;-webkit-text-stroke-width:0.22px;color:#242424;">Product Variant Name</div>
<div class="t" style="left:283.30px;top:329.00px;font-size:6.4px;font-weight:normal;-webkit-text-stroke-width:0.22px;color:#242424;">Data</div>
<div class="t" style="left:135.10px;width:300px;text-align:right;top:329.00px;font-size:6.5px;font-weight:normal;-webkit-text-stroke-width:0.22px;color:#242424;">Totals</div>
<div class="t" style="left:181.50px;width:300px;text-align:right;top:329.00px;font-size:6.5px;font-weight:normal;-webkit-text-stroke-width:0.22px;color:#242424;">Feb'2023</div>
<div class="t" style="left:228.20px;width:300px;text-align:right;top:329.00px;font-size:6.5px;font-weight:normal;-webkit-text-stroke-width:0.22px;color:#242424;">Mar'2023</div>
<div class="t" style="left:274.20px;width:300px;text-align:right;top:329.00px;font-size:6.5px;font-weight:normal;-webkit-text-stroke-width:0.22px;color:#242424;">Apr'2023</div>
<div class="t" style="left:321.80px;width:300px;text-align:right;top:329.00px;font-size:6.5px;font-weight:normal;-webkit-text-stroke-width:0.22px;color:#242424;">May'2023</div>
<div class="t" style="left:367.10px;width:300px;text-align:right;top:329.00px;font-size:6.5px;font-weight:normal;-webkit-text-stroke-width:0.22px;color:#242424;">Jun'2023</div>
<div class="t" style="left:165.40px;top:353.00px;font-size:6.7px;font-weight:normal;-webkit-text-stroke-width:0.22px;color:#242424;">Car Audio Unit-200</div>
<div class="t" style="left:283.30px;top:353.00px;font-size:6.7px;font-weight:normal;-webkit-text-stroke-width:0.22px;color:#242424;">2023 Prophet 24mo</div>
<div class="t" style="left:134.50px;width:300px;text-align:right;top:352.00px;font-size:6.6px;font-weight:normal;-webkit-text-stroke-width:0.22px;color:#242424;letter-spacing:-0.22px">79,622</div>
<div class="t" style="left:180.90px;width:300px;text-align:right;top:352.00px;font-size:6.6px;font-weight:normal;-webkit-text-stroke-width:0.07px;color:#424242;letter-spacing:-0.22px">5,087</div>
<div class="t" style="left:227.60px;width:300px;text-align:right;top:352.00px;font-size:6.6px;font-weight:normal;-webkit-text-stroke-width:0.07px;color:#424242;letter-spacing:-0.22px">6,382</div>
<div class="t" style="left:273.60px;width:300px;text-align:right;top:352.00px;font-size:6.6px;font-weight:normal;-webkit-text-stroke-width:0.07px;color:#424242;letter-spacing:-0.22px">10,000</div>
<div class="t" style="left:321.20px;width:300px;text-align:right;top:352.00px;font-size:6.6px;font-weight:normal;-webkit-text-stroke-width:0.07px;color:#424242;letter-spacing:-0.22px">7,670</div>
<div class="t" style="left:366.50px;width:300px;text-align:right;top:352.00px;font-size:6.6px;font-weight:normal;-webkit-text-stroke-width:0.07px;color:#424242;letter-spacing:-0.22px">7,997</div>
<div class="t" style="left:283.30px;top:371.00px;font-size:6.5px;font-weight:normal;-webkit-text-stroke-width:0.22px;color:#242424;letter-spacing:-0.05px">Revenue Forecast - Baseline Price, P...</div>
<div class="t" style="left:134.50px;width:300px;text-align:right;top:371.00px;font-size:6.6px;font-weight:normal;-webkit-text-stroke-width:0.22px;color:#242424;letter-spacing:-0.22px">31,367,492</div>
<div class="t" style="left:180.90px;width:300px;text-align:right;top:371.00px;font-size:6.6px;font-weight:normal;-webkit-text-stroke-width:0.07px;color:#424242;letter-spacing:-0.22px">2,082,416</div>
<div class="t" style="left:227.60px;width:300px;text-align:right;top:371.00px;font-size:6.6px;font-weight:normal;-webkit-text-stroke-width:0.07px;color:#424242;letter-spacing:-0.22px">2,612,428</div>
<div class="t" style="left:273.60px;width:300px;text-align:right;top:371.00px;font-size:6.6px;font-weight:normal;-webkit-text-stroke-width:0.07px;color:#424242;letter-spacing:-0.22px">2,867,752</div>
<div class="t" style="left:321.20px;width:300px;text-align:right;top:371.00px;font-size:6.6px;font-weight:normal;-webkit-text-stroke-width:0.07px;color:#424242;letter-spacing:-0.22px">3,139,436</div>
<div class="t" style="left:366.50px;width:300px;text-align:right;top:371.00px;font-size:6.6px;font-weight:normal;-webkit-text-stroke-width:0.07px;color:#424242;letter-spacing:-0.22px">3,273,752</div>
<div class="t" style="left:283.30px;top:390.00px;font-size:6.7px;font-weight:normal;-webkit-text-stroke-width:0.22px;color:#242424;">+12mo HD Monthly</div>
<div class="t" style="left:134.50px;width:300px;text-align:right;top:389.00px;font-size:6.6px;font-weight:normal;-webkit-text-stroke-width:0.22px;color:#242424;letter-spacing:-0.22px">73,071</div>
<div class="t" style="left:180.90px;width:300px;text-align:right;top:389.00px;font-size:6.6px;font-weight:normal;-webkit-text-stroke-width:0.07px;color:#424242;letter-spacing:-0.22px">4,491</div>
<div class="t" style="left:227.60px;width:300px;text-align:right;top:389.00px;font-size:6.6px;font-weight:normal;-webkit-text-stroke-width:0.07px;color:#424242;letter-spacing:-0.22px">6,005</div>
<div class="t" style="left:273.60px;width:300px;text-align:right;top:389.00px;font-size:6.6px;font-weight:normal;-webkit-text-stroke-width:0.07px;color:#424242;letter-spacing:-0.22px">6,854</div>
<div class="t" style="left:321.20px;width:300px;text-align:right;top:389.00px;font-size:6.6px;font-weight:normal;-webkit-text-stroke-width:0.07px;color:#424242;letter-spacing:-0.22px">7,478</div>
<div class="t" style="left:366.50px;width:300px;text-align:right;top:389.00px;font-size:6.6px;font-weight:normal;-webkit-text-stroke-width:0.07px;color:#424242;letter-spacing:-0.22px">7,618</div>
<div class="t" style="left:165.40px;top:409.00px;font-size:6.7px;font-weight:normal;-webkit-text-stroke-width:0.22px;color:#242424;">Car Audio Unit-500</div>
<div class="t" style="left:283.30px;top:409.00px;font-size:6.7px;font-weight:normal;-webkit-text-stroke-width:0.22px;color:#242424;">2023 Prophet 24mo</div>
<div class="t" style="left:134.50px;width:300px;text-align:right;top:408.00px;font-size:6.6px;font-weight:normal;-webkit-text-stroke-width:0.22px;color:#242424;letter-spacing:-0.22px">45,835</div>
<div class="t" style="left:180.90px;width:300px;text-align:right;top:408.00px;font-size:6.6px;font-weight:normal;-webkit-text-stroke-width:0.07px;color:#424242;letter-spacing:-0.22px">3,028</div>
<div class="t" style="left:227.60px;width:300px;text-align:right;top:408.00px;font-size:6.6px;font-weight:normal;-webkit-text-stroke-width:0.07px;color:#424242;letter-spacing:-0.22px">3,833</div>
<div class="t" style="left:273.60px;width:300px;text-align:right;top:408.00px;font-size:6.6px;font-weight:normal;-webkit-text-stroke-width:0.07px;color:#424242;letter-spacing:-0.22px">4,252</div>
<div class="t" style="left:321.20px;width:300px;text-align:right;top:408.00px;font-size:6.6px;font-weight:normal;-webkit-text-stroke-width:0.07px;color:#424242;letter-spacing:-0.22px">4,559</div>
<div class="t" style="left:366.50px;width:300px;text-align:right;top:408.00px;font-size:6.6px;font-weight:normal;-webkit-text-stroke-width:0.07px;color:#424242;letter-spacing:-0.22px">4,765</div>
<div class="t" style="left:283.30px;top:428.00px;font-size:6.5px;font-weight:normal;-webkit-text-stroke-width:0.22px;color:#242424;letter-spacing:-0.05px">Revenue Forecast - Baseline Price, P...</div>
<div class="t" style="left:132.90px;width:300px;text-align:right;top:427.00px;font-size:6.6px;font-weight:normal;-webkit-text-stroke-width:0.22px;color:#242424;letter-spacing:-0.1px">23,403,9...</div>
<div class="t" style="left:179.30px;width:300px;text-align:right;top:427.00px;font-size:6.6px;font-weight:normal;-webkit-text-stroke-width:0.07px;color:#424242;letter-spacing:-0.1px">1,546,316...</div>
<div class="t" style="left:227.60px;width:300px;text-align:right;top:427.00px;font-size:6.6px;font-weight:normal;-webkit-text-stroke-width:0.07px;color:#424242;letter-spacing:-0.22px">1,956,948.26</div>
<div class="t" style="left:272.00px;width:300px;text-align:right;top:427.00px;font-size:6.6px;font-weight:normal;-webkit-text-stroke-width:0.07px;color:#424242;letter-spacing:-0.1px">2,171,268...</div>
<div class="t" style="left:321.20px;width:300px;text-align:right;top:427.00px;font-size:6.6px;font-weight:normal;-webkit-text-stroke-width:0.07px;color:#424242;letter-spacing:-0.22px">2,327,830.01</div>
<div class="t" style="left:364.90px;width:300px;text-align:right;top:427.00px;font-size:6.6px;font-weight:normal;-webkit-text-stroke-width:0.07px;color:#424242;letter-spacing:-0.1px">2,433,109...</div>
<div class="t" style="left:283.30px;top:446.00px;font-size:6.7px;font-weight:normal;-webkit-text-stroke-width:0.22px;color:#242424;">+12mo HD Monthly</div>
<div class="t" style="left:134.50px;width:300px;text-align:right;top:445.00px;font-size:6.6px;font-weight:normal;-webkit-text-stroke-width:0.22px;color:#242424;letter-spacing:-0.22px">43,621</div>
<div class="t" style="left:180.90px;width:300px;text-align:right;top:445.00px;font-size:6.6px;font-weight:normal;-webkit-text-stroke-width:0.07px;color:#424242;letter-spacing:-0.22px">2,665</div>
<div class="t" style="left:227.60px;width:300px;text-align:right;top:445.00px;font-size:6.6px;font-weight:normal;-webkit-text-stroke-width:0.07px;color:#424242;letter-spacing:-0.22px">3,504</div>
<div class="t" style="left:273.60px;width:300px;text-align:right;top:445.00px;font-size:6.6px;font-weight:normal;-webkit-text-stroke-width:0.07px;color:#424242;letter-spacing:-0.22px">4,103</div>
<div class="t" style="left:321.20px;width:300px;text-align:right;top:445.00px;font-size:6.6px;font-weight:normal;-webkit-text-stroke-width:0.07px;color:#424242;letter-spacing:-0.22px">4,394</div>
<div class="t" style="left:366.50px;width:300px;text-align:right;top:445.00px;font-size:6.6px;font-weight:normal;-webkit-text-stroke-width:0.07px;color:#424242;letter-spacing:-0.22px">4,666</div>
<div class="t" style="left:165.40px;top:463.00px;font-size:6.5px;font-weight:normal;-webkit-text-stroke-width:0.07px;color:#323130;">Totals [2023 Prophet 24mo]</div>
<div class="t" style="left:134.50px;width:300px;text-align:right;top:462.00px;font-size:6.6px;font-weight:normal;-webkit-text-stroke-width:0.22px;color:#242424;letter-spacing:-0.22px">994,653</div>
<div class="t" style="left:180.90px;width:300px;text-align:right;top:462.00px;font-size:6.6px;font-weight:normal;-webkit-text-stroke-width:0.07px;color:#424242;letter-spacing:-0.22px">66,035</div>
<div class="t" style="left:227.60px;width:300px;text-align:right;top:462.00px;font-size:6.6px;font-weight:normal;-webkit-text-stroke-width:0.07px;color:#424242;letter-spacing:-0.22px">82,975</div>
<div class="t" style="left:273.60px;width:300px;text-align:right;top:462.00px;font-size:6.6px;font-weight:normal;-webkit-text-stroke-width:0.07px;color:#424242;letter-spacing:-0.22px">94,327</div>
<div class="t" style="left:321.20px;width:300px;text-align:right;top:462.00px;font-size:6.6px;font-weight:normal;-webkit-text-stroke-width:0.07px;color:#424242;letter-spacing:-0.22px">99,351</div>
<div class="t" style="left:366.50px;width:300px;text-align:right;top:462.00px;font-size:6.6px;font-weight:normal;-webkit-text-stroke-width:0.07px;color:#424242;letter-spacing:-0.22px">102,690</div>
<div class="t" style="left:735.80px;top:30.00px;font-size:7.9px;font-weight:normal;-webkit-text-stroke-width:0.07px;color:#303030;-webkit-text-stroke-width:0.05px">Teams chats</div>
<div class="t" style="left:725.00px;top:49.00px;font-size:6.5px;font-weight:normal;-webkit-text-stroke-width:0.07px;color:#5B5FC7;">Chat</div>
<div class="t" style="left:731.00px;top:69.00px;font-size:6.5px;font-weight:normal;-webkit-text-stroke-width:0.07px;color:#323130;">Chats connected to 2023 Prophet 24mo</div>
<div class="t" style="left:774.00px;top:99.00px;font-size:6.7px;font-weight:normal;-webkit-text-stroke-width:0.12px;color:#FFFFFF;">New connected chat</div>
<div class="t" style="left:731.00px;top:131.00px;font-size:6.5px;font-weight:normal;-webkit-text-stroke-width:0.07px;color:#323130;">Other chats</div>
<div class="t" style="left:733.40px;top:153.00px;font-size:6.9px;font-weight:normal;-webkit-text-stroke-width:0.07px;color:#4B5233;width:12.4px;text-align:center;letter-spacing:-0.2px">TU</div>
<div class="t" style="left:751.60px;top:149.00px;font-size:6.5px;font-weight:normal;-webkit-text-stroke-width:0.07px;color:#323130;">Forecast (Prophet)</div>
<div class="t" style="left:751.60px;top:158.00px;font-size:5.5px;font-weight:normal;-webkit-text-stroke-width:0.07px;color:#424242;"><i>App added</i></div>
<div class="t" style="left:569.30px;width:300px;text-align:right;top:149.00px;font-size:6.0px;font-weight:normal;-webkit-text-stroke-width:0.07px;color:#424242;letter-spacing:-0.15px">10/4</div>
<div class="t" style="left:733.40px;top:177.00px;font-size:6.9px;font-weight:normal;-webkit-text-stroke-width:0.07px;color:#5A3236;width:12.4px;text-align:center;letter-spacing:-0.2px">TU</div>
<div class="t" style="left:751.60px;top:172.00px;font-size:6.5px;font-weight:normal;-webkit-text-stroke-width:0.07px;color:#323130;">Forecast (Prophet)</div>
<div class="t" style="left:751.60px;top:181.00px;font-size:5.5px;font-weight:normal;-webkit-text-stroke-width:0.07px;color:#424242;">You: Have we reached consensus on the Octo...</div>
<div class="t" style="left:569.30px;width:300px;text-align:right;top:172.00px;font-size:6.0px;font-weight:normal;-webkit-text-stroke-width:0.07px;color:#424242;letter-spacing:-0.15px">9/26</div>
<div class="t" style="left:733.40px;top:200.00px;font-size:6.9px;font-weight:normal;-webkit-text-stroke-width:0.07px;color:#2D5A48;width:12.4px;text-align:center;letter-spacing:-0.2px">TU</div>
<div class="t" style="left:751.60px;top:196.00px;font-size:6.5px;font-weight:normal;-webkit-text-stroke-width:0.07px;color:#323130;">Forecast Prophet 52 week</div>
<div class="t" style="left:751.60px;top:204.00px;font-size:5.5px;font-weight:normal;-webkit-text-stroke-width:0.07px;color:#424242;">You: That is OK</div>
<div class="t" style="left:569.30px;width:300px;text-align:right;top:196.00px;font-size:6.0px;font-weight:normal;-webkit-text-stroke-width:0.07px;color:#424242;letter-spacing:-0.15px">9/25</div></div>
</body></html>
